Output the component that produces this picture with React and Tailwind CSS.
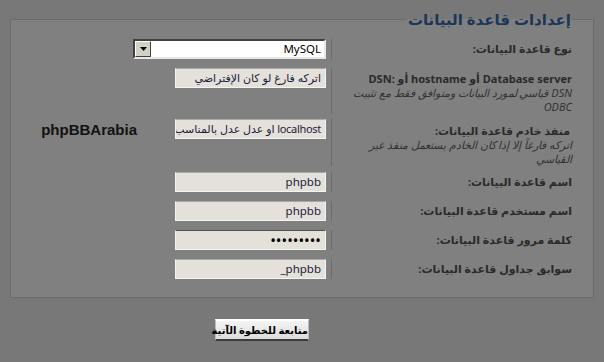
export default function App() {
  const rows = [
    { label: 'اسم قاعدة البيانات:', value: 'phpbb' },
    { label: 'اسم مستخدم قاعدة البيانات:', value: 'phpbb' },
    { label: 'كلمة مرور قاعدة البيانات:', value: '•••••••••', pass: true },
    { label: 'سوابق جداول قاعدة البيانات:', value: '_phpbb' },
  ];

  const inputCls =
    'w-[151px] h-[20px] bg-[#e4e0da] border border-t-[#a8a8a8] border-l-[#f4f4f4] border-b-[#f4f4f4] border-r-[#f4f4f4] pl-[3px] pr-[4px] text-[11.5px] leading-[18px] text-[#1c1c3c] text-right whitespace-nowrap overflow-hidden';

  return (
    <div
      className="min-h-[362px] bg-[#787878] pt-[11px]"
      style={{ fontFamily: '"Noto Sans", "DejaVu Sans", sans-serif' }}
    >
      <fieldset
        dir="rtl"
        className="mx-[10px] border border-[#6c6c6c] bg-[#808080] pr-[21px] pl-[8px] pb-[18px] pt-[12px]"
      >
        <legend className="px-[1px] text-[15px] font-bold text-[#1d3557] leading-[16px]">
          إعدادات قاعدة البيانات
        </legend>

        {/* نوع قاعدة البيانات */}
        <div className="flex items-start mb-[9px]">
          <div className="w-[241px] h-[20px] border-l border-[#6c6c6c] text-[11px] font-bold text-[#2a2a2a] leading-[20px]">
            نوع قاعدة البيانات:
          </div>
          <div className="pr-[5px]">
            <div className="w-[193px] h-[20px] flex bg-white border-2 border-t-[#404040] border-r-[#e8e8e8] border-b-[#e8e8e8] border-l-[#404040]">
              <div className="flex-1 px-[3px] text-[11.5px] leading-[16px] text-black">MySQL</div>
              <div className="w-[16px] h-full bg-[#d4d0c8] border border-t-white border-l-white border-r-[#404040] border-b-[#404040] flex items-center justify-center">
                <svg width="7" height="4" viewBox="0 0 7 4"><path d="M0 0h7L3.5 4z" fill="#000" /></svg>
              </div>
            </div>
          </div>
        </div>

        {/* Database server */}
        <div className="flex items-start mb-[5px]">
          <div className="w-[241px] border-l border-[#6c6c6c] text-[#2a2a2a]">
            <div className="text-[11px] font-bold leading-[15px] pt-[3px] whitespace-nowrap">
              Database server أو hostname أو :DSN
            </div>
            <div className="text-[11px] italic leading-[14px] text-[#333]">
              DSN قياسي لمورد البيانات ومتوافق فقط مع تثبيت
              <br />
              ODBC
            </div>
          </div>
          <div className="pr-[5px]">
            <div className={inputCls + ' !text-[11px]'}>اتركه فارغ لو كان الإفتراضي</div>
          </div>
        </div>

        {/* منفذ خادم */}
        <div className="flex items-start mb-[6px]">
          <div className="w-[241px] border-l border-[#6c6c6c] text-[#2a2a2a]">
            <div className="text-[11px] font-bold leading-[15px] pt-[4px] pr-[2px]">
              منفذ خادم قاعدة البيانات:
            </div>
            <div className="text-[11px] italic leading-[14px] text-[#333]">
              اتركه فارغاً إلا إذا كان الخادم يستعمل منفذ غير
              <br />
              القياسي
            </div>
          </div>
          <div className="pr-[5px] flex items-start gap-[38px]">
            <div className={inputCls + ' !text-[11px] tracking-[-0.3px]'}>localhost او عدل عدل بالمناسب</div>
            <div
              dir="ltr"
              className="text-[15px] font-bold text-[#111] leading-[20px] pt-[1px]"
              style={{ fontFamily: '"Liberation Sans", Arial, sans-serif' }}
            >
              phpBBArabia
            </div>
          </div>
        </div>

        {rows.map((r, i) => (
          <div key={i} className={'flex items-start ' + (i < rows.length - 1 ? 'mb-[9px]' : '')}>
            <div className="w-[241px] h-[20px] border-l border-[#6c6c6c] text-[11px] font-bold text-[#2a2a2a] leading-[20px]">
              {r.label}
            </div>
            <div className="pr-[5px]">
              <div
                dir="ltr"
                className={
                  inputCls +
                  (r.pass ? ' !border-t-[#505050] !text-[15px] !text-black' : '')
                }
              >
                {r.value}
              </div>
            </div>
          </div>
        ))}
      </fieldset>

      <div className="pt-[18px] pl-[215px]">
        <button
          dir="rtl"
          className="w-[94px] h-[22px] whitespace-nowrap bg-gradient-to-b from-[#f4f4f4] to-[#dcdcdc] border-t-2 border-t-white border-b-2 border-b-[#3c3c3c] border-x border-x-[#bcbcbc] text-[10px] tracking-[-0.2px] font-bold text-black leading-[16px]"
        >
          متابعة للخطوة الآتية
        </button>
      </div>
    </div>
  );
}
